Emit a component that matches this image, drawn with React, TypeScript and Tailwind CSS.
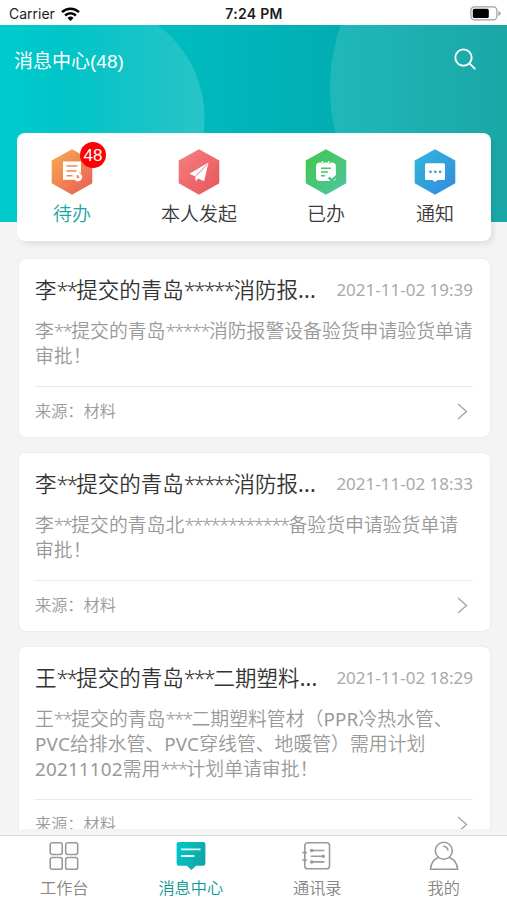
import { ReactNode } from "react";
import clsx from "clsx";

type Message = {
  title: string;
  time: string;
  lines: string[];
  source: string;
};

const messages: Message[] = [
  {
    title: "李**提交的青岛*****消防报...",
    time: "2021-11-02 19:39",
    lines: ["李**提交的青岛*****消防报警设备验货申请验货单请", "审批！"],
    source: "材料",
  },
  {
    title: "李**提交的青岛*****消防报...",
    time: "2021-11-02 18:33",
    lines: ["李**提交的青岛北************备验货申请验货单请", "审批！"],
    source: "材料",
  },
  {
    title: "王**提交的青岛***二期塑料...",
    time: "2021-11-02 18:29",
    lines: [
      "王**提交的青岛***二期塑料管材（PPR冷热水管、",
      "PVC给排水管、PVC穿线管、地暖管）需用计划",
      "20211102需用***计划单请审批！",
    ],
    source: "材料",
  },
];

// Runs of asterisks sit tighter than the surrounding text, Latin runs are a bit heavier
function Masked({ text }: { text: string }) {
  return (
    <>
      {text.split(/(\*+|[A-Z0-9.]+)/).map((part, i) => {
        if (part.startsWith("*")) {
          return <span key={i} className="tracking-[-0.09em]">{part}</span>;
        }
        return <span key={i} className={clsx(i % 2 === 1 && "font-normal tracking-[0.01em]")}>{part}</span>;
      })}
    </>
  );
}

function StatusBar() {
  return (
    <div className="h-[25px] shrink-0 bg-white grid grid-cols-3 items-center pl-[9px] pr-[6px] pt-[2px] font-['Inter','Liberation_Sans',sans-serif] text-[14px] leading-none text-[#1c1c1c]">
      <div className="flex items-center gap-[6px]">
        <span>Carrier</span>
        <svg width="19" height="14" viewBox="0 0 19 14" fill="none" stroke="#000" strokeWidth="2.5">
          <path d="M1 5.2a12.2 12.2 0 0 1 17 0" />
          <path d="M4.1 8.5a7.8 7.8 0 0 1 10.8 0" />
          <path d="M9.5 14l-3-3.1a4.4 4.4 0 0 1 6 0z" fill="#000" stroke="none" />
        </svg>
      </div>
      <div className="text-center font-semibold text-[14px] tracking-[0.02em] pr-[2px]">7:24 PM</div>
      <div className="flex justify-end">
        <svg width="31" height="15" viewBox="0 0 31 15">
          <rect x="0.9" y="0.9" width="26" height="13" rx="3.6" fill="none" stroke="#a0a0a0" strokeWidth="1.2" />
          <rect x="2.8" y="2.8" width="16" height="9.2" rx="1.6" fill="#000" />
          <path d="M28.4 5v5q2.2-.8 2.2-2.5t-2.2-2.5z" fill="#a0a0a0" />
        </svg>
      </div>
    </div>
  );
}

function Header() {
  return (
    <header className="relative h-[197px] shrink-0 overflow-hidden bg-linear-to-r from-[#00cbcd] via-[#00b0b5] via-60% to-[#08a09f]">
      <svg className="absolute inset-0" width="507" height="197" viewBox="0 0 507 197">
        <defs>
          <linearGradient id="glowLeft" x1="0" x2="1">
            <stop offset="0.4" stopColor="#fff" stopOpacity="0" />
            <stop offset="1" stopColor="#fff" stopOpacity="0.16" />
          </linearGradient>
          <linearGradient id="glowRight" x1="0" x2="1">
            <stop offset="0" stopColor="#fff" stopOpacity="0.12" />
            <stop offset="0.6" stopColor="#fff" stopOpacity="0.06" />
          </linearGradient>
        </defs>
        <circle cx="89" cy="93" r="115.5" fill="url(#glowLeft)" />
        <circle cx="520" cy="63" r="190" fill="url(#glowRight)" />
      </svg>
      <div className="relative flex items-start justify-between pl-[14px] pr-[30px] pt-[23px]">
        <h1 className="font-['Liberation_Sans','Noto_Sans_CJK_SC',sans-serif] text-[19px] leading-[28px] text-white">消息中心(48)</h1>
        <svg width="24" height="24" viewBox="0 0 24 24" fill="none" stroke="#fff" strokeWidth="1.9" strokeLinecap="round">
          <circle cx="10.5" cy="9.6" r="8.2" />
          <path d="M16.4 15.4l5.4 5.2" />
        </svg>
      </div>
    </header>
  );
}

function Hexagon({ id, from, to, children }: { id: string; from: string; to: string; children: ReactNode }) {
  return (
    <svg width="42" height="46" viewBox="0 0 42 46">
      <defs>
        <linearGradient id={id} x1="0.1" y1="0.1" x2="0.8" y2="0.9">
          <stop stopColor={from} />
          <stop offset="1" stopColor={to} />
        </linearGradient>
      </defs>
      <path d="M21 .3l20.3 11.2v22.8L21 45.7.7 34.3V11.5z" fill={`url(#${id})`} />
      {children}
    </svg>
  );
}

function Tab({ label, active, badge, children }: { label: string; active?: boolean; badge?: number; children: ReactNode }) {
  return (
    <div className="relative flex flex-col items-center">
      {children}
      {badge && (
        <span className="absolute -top-[7px] left-1/2 ml-[8px] flex size-[26px] items-center justify-center rounded-full bg-[#fd0006] font-['Liberation_Sans',sans-serif] text-[17px] leading-none text-white">
          {badge}
        </span>
      )}
      <span className={clsx("mt-[5px] text-[19px] leading-[28px] font-[350] whitespace-nowrap", active ? "text-[#1ba5a6]" : "text-[#3a3a3a]")}>
        {label}
      </span>
    </div>
  );
}

function Tabs() {
  return (
    <div className="relative z-10 -mt-[89px] ml-[17px] flex h-[108px] w-[474px] shrink-0 rounded-[8px] bg-white pt-[16px] shadow-[3px_4px_5px_rgba(0,0,0,0.07)]">
      <div className="w-[110px]">
        <Tab label="待办" active badge={48}>
          <Hexagon id="todo" from="#f6a552" to="#ea6656">
            <path d="M12 12.5h18v11.2a5.2 5.2 0 0 0-6.3 7H12z" fill="#fff" />
            <path d="M15.5 17h11M15.5 22h10M15.5 26.7h6" stroke="#f08b58" strokeWidth="1.5" />
            <circle cx="26.8" cy="28" r="4.4" fill="#fff" />
            <path d="M26.5 26v2.6l2-.6" stroke="#ec7458" strokeWidth="1.3" fill="none" />
          </Hexagon>
        </Tab>
      </div>
      <div className="w-[144px]">
        <Tab label="本人发起">
          <Hexagon id="mine" from="#f47c7c" to="#e95b60">
            <path d="M30.5 13.5L11.5 24.8l5.5 2.4z" fill="#fff" />
            <path d="M30.5 13.5L17 27.2l.8 5 2.5-2.6 5.8 2.6z" fill="#fff" />
            <path d="M29 15.7L17.4 27.8" stroke="#ed656b" strokeWidth="0.7" />
          </Hexagon>
        </Tab>
      </div>
      <div className="w-[110px]">
        <Tab label="已办">
          <Hexagon id="done" from="#45c652" to="#4cc596">
            <path d="M15 13.4h1.8v1.4h1.5v-1.4h5.4v1.4h1.5v-1.4h1.7a4 4 0 0 1 4 4V26L27 29.8l-2.5-2.2-1.6 1.8L25.4 32H15a4 4 0 0 1-4-4V17.4a4 4 0 0 1 4-4z" fill="#fff" />
            <path d="M17.4 12v2.5M23.8 12v2.5" stroke="#fff" strokeWidth="1.2" />
            <path d="M16 19.2h10M16 23h7M16 26.7h4" stroke="#46c66b" strokeWidth="1.5" />
            <path d="M28.7 32q2.3-.8 2.3-3.2z" fill="#fff" />
          </Hexagon>
        </Tab>
      </div>
      <div className="w-[108px]">
        <Tab label="通知">
          <Hexagon id="notice" from="#30b4dc" to="#3490de">
            <path d="M12.5 14.2h17a1.5 1.5 0 0 1 1.5 1.5v13.8a1.5 1.5 0 0 1-1.5 1.5h-5.8L21 33l-2.7-2H12.5a1.5 1.5 0 0 1-1.5-1.5V15.7a1.5 1.5 0 0 1 1.5-1.5z" fill="#fff" />
            <circle cx="16.5" cy="22.8" r="1.4" fill="#359fdd" />
            <circle cx="21.3" cy="22.8" r="1.4" fill="#359fdd" />
            <circle cx="26.1" cy="22.8" r="1.4" fill="#359fdd" />
          </Hexagon>
        </Tab>
      </div>
    </div>
  );
}

function MessageCard({ message }: { message: Message }) {
  return (
    <article className="shrink-0 rounded-[8px] border border-[#ededed] bg-white pl-[16px] pr-[17px] pb-px">
      <div className="flex items-center justify-between pt-[16px]">
        <h2 className="text-[21.5px] leading-[30px] font-[350] whitespace-nowrap text-[#333]">
          <Masked text={message.title} />
        </h2>
        <time className="text-[17px] leading-[30px] whitespace-nowrap text-[#a9a9a9]">{message.time}</time>
      </div>
      <div className="mt-[14px] text-[18.85px] leading-[25px] font-[350] whitespace-nowrap text-[#999]">
        {message.lines.map((line) => (
          <p key={line}>
            <Masked text={line} />
          </p>
        ))}
      </div>
      <div className="mt-[17px] flex h-[50px] items-center justify-between border-t border-[#e9e9e9] pr-[5px]">
        <span className="text-[16.2px] font-[350] text-[#999]">来源：{message.source}</span>
        <svg width="11" height="17" viewBox="0 0 11 17" fill="none" stroke="#a6a6a6" strokeWidth="1.4">
          <path d="M1 1l8.5 7.5L1 16" />
        </svg>
      </div>
    </article>
  );
}

function NavItem({ label, active, children }: { label: string; active?: boolean; children: ReactNode }) {
  return (
    <div className="flex flex-1 flex-col items-center pt-[5px]">
      <svg width="36" height="34" viewBox="0 0 36 34" fill="none" stroke="#999" strokeWidth="1.8">
        {children}
      </svg>
      <span className={clsx("mt-[5px] text-[16.2px] leading-[24px] font-[350]", active ? "text-[#0d9796]" : "text-[#868686]")}>{label}</span>
    </div>
  );
}

function BottomNav() {
  return (
    <nav className="flex h-[65px] shrink-0 border-t border-[#d9d9d9] bg-white pl-[1px]">
      <NavItem label="工作台">
        <rect x="2.4" y="1.9" width="13.6" height="13.4" rx="2.2" />
        <rect x="19.9" y="1.9" width="13.6" height="13.4" rx="2.2" />
        <rect x="2.4" y="18.7" width="13.6" height="13.4" rx="2.2" />
        <rect x="19.9" y="18.7" width="13.6" height="13.4" rx="2.2" />
      </NavItem>
      <NavItem label="消息中心" active>
        <defs>
          <linearGradient id="bubble" x1="0" x2="1" y1="0.3" y2="0.7">
            <stop stopColor="#00c6c6" />
            <stop offset="1" stopColor="#12a3a4" />
          </linearGradient>
        </defs>
        <path d="M4.2 1h27.6a2.5 2.5 0 0 1 2.5 2.5v22a2.5 2.5 0 0 1-2.5 2.5h-8L18.3 33l-5-5H4.2a2.5 2.5 0 0 1-2.5-2.5v-22A2.5 2.5 0 0 1 4.2 1z" fill="url(#bubble)" stroke="none" />
        <path d="M6.8 9.5h22M6.8 17h15" stroke="#e8ffff" strokeWidth="2" />
      </NavItem>
      <NavItem label="通讯录">
        <rect x="4.2" y="2" width="28" height="29.5" rx="3.2" />
        <path d="M1.5 13.2h5M1.5 21.7h5M11 10.7h15.3M11 17.2h15.3M11 23.7h15.3" />
        <g fill="#999" stroke="none">
          <circle cx="12" cy="10.7" r="2" />
          <circle cx="25" cy="17.2" r="2" />
          <circle cx="12" cy="23.7" r="2" />
        </g>
      </NavItem>
      <NavItem label="我的">
        <circle cx="17.8" cy="11" r="9.6" />
        <path d="M17 6q4.8.2 5.7 5" />
        <path d="M11.7 18.8C6 21 3 25.5 2.8 32h30.6c-.3-6.5-3.6-11-9.4-13.2" />
      </NavItem>
    </nav>
  );
}

export default function App() {
  return (
    <div className="flex h-[900px] w-[507px] flex-col overflow-hidden bg-[#f4f4f4] font-['Noto_Sans','Noto_Sans_CJK_SC',sans-serif]">
      <StatusBar />
      <Header />
      <Tabs />
      <main className="mt-[17px] mb-[6px] flex min-h-0 flex-1 flex-col gap-[14px] overflow-hidden pl-[18px] pr-[16px]">
        {messages.map((message) => (
          <MessageCard key={message.time} message={message} />
        ))}
      </main>
      <BottomNav />
    </div>
  );
}
